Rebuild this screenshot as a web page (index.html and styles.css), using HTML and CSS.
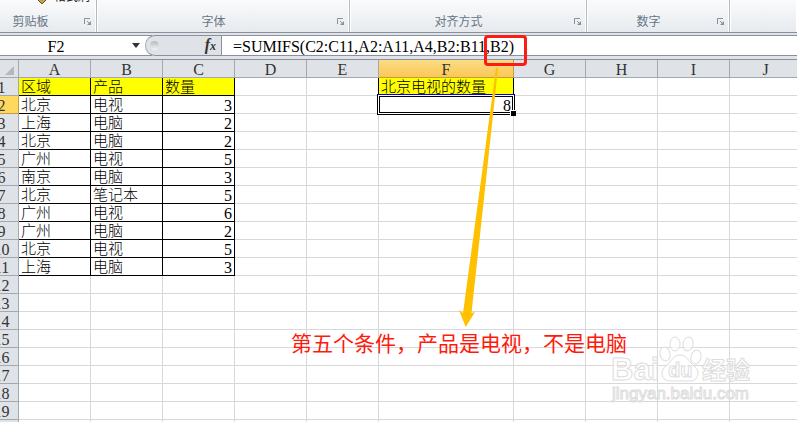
FILE: index.html
```html
<!DOCTYPE html>
<html lang="zh-CN">
<head>
    <meta charset="UTF-8">
    <meta name="viewport" content="width=device-width, initial-scale=1.0">
    <title>SUMIFS</title>
    <link rel="stylesheet" href="styles.css">
</head>
<body>
    <div class="app">
        <div class="ribbon">
            <div class="group group-clipboard">
                <button class="painter">
                    <svg width="12" height="12" viewBox="0 0 12 12"><path d="M1 7L4 4L8 4L11 7L6 12Z" fill="#c9a04a" stroke="#6b5320"/></svg>
                    格式刷
                </button>
                <span class="group-name">剪贴板</span>
                <button class="launcher" aria-label="剪贴板"><svg width="8" height="8"><use href="#launch"/></svg></button>
            </div>
            <div class="group group-font">
                <span class="group-name">字体</span>
                <button class="launcher" aria-label="字体"><svg width="8" height="8"><use href="#launch"/></svg></button>
            </div>
            <div class="group group-align">
                <span class="group-name">对齐方式</span>
                <button class="launcher" aria-label="对齐方式"><svg width="8" height="8"><use href="#launch"/></svg></button>
            </div>
            <div class="group group-number">
                <span class="group-name">数字</span>
                <button class="launcher" aria-label="数字"><svg width="8" height="8"><use href="#launch"/></svg></button>
            </div>
            <div class="group group-rest"></div>
        </div>

        <div class="formula-bar">
            <input class="name-box" type="text" value="F2" aria-label="名称框">
            <button class="name-arrow" aria-label="名称"><svg width="8" height="5"><path d="M0 0H8L4 5Z" fill="#333"/></svg></button>
            <div class="fx-area">
                <span class="knob"></span>
                <button class="fx" aria-label="插入函数">f<small>x</small></button>
            </div>
            <input class="formula" type="text" value="=SUMIFS(C2:C11,A2:A11,A4,B2:B11,B2)" aria-label="编辑栏">
        </div>

        <div class="sheet">
            <table id="grid">
                <colgroup>
                    <col class="col-num"><col><col><col><col><col><col class="col-wide"><col><col><col><col>
                </colgroup>
                <thead>
                    <tr>
                        <th class="corner"><svg width="9" height="9"><path d="M9 0V9H0Z" fill="#b4b8bd"/></svg></th>
                        <th>A</th><th>B</th><th>C</th><th>D</th><th>E</th><th class="active">F</th><th>G</th><th>H</th><th>I</th><th>J</th>
                    </tr>
                </thead>
                <tbody>
                    <!-- 由脚本生成 -->
                </tbody>
            </table>
        </div>

        <svg class="arrow" width="40" height="260" viewBox="0 0 40 260">
            <path d="M37 0L39 0L27 112L12.500 245L16 244L6.700 259L0 242L4 245L22 112Z" fill="#ffc000"/>
        </svg>
        <div class="mark"></div>
        <div class="note">第五个条件，产品是电视，不是电脑</div>

        <svg class="watermark" width="150" height="74" viewBox="0 0 150 74">
            <g fill="#fff" fill-opacity="0.7" stroke="#dcdcdc" stroke-width="1">
                <text x="1" y="46" class="wm-logo">Bai</text>
                <ellipse cx="55" cy="20" rx="5" ry="7" transform="rotate(-12 55 20)"/>
                <ellipse cx="65" cy="10" rx="5" ry="7"/>
                <ellipse cx="78" cy="10" rx="5" ry="7" transform="rotate(10 78 10)"/>
                <ellipse cx="86" cy="23" rx="5" ry="7" transform="rotate(14 86 23)"/>
                <path d="M70 21C65 21 63 24 60 28C56 32 52 34 52 40C52 45 56 47 61 47H80C85 47 88 44 88 39C88 34 83 32 80 28C77 24 75 21 70 21Z"/>
                <text x="58" y="43" class="wm-du">du</text>
                <text x="92" y="45" class="wm-cn">经验</text>
                <text x="2" y="65" class="wm-url">jingyan.baidu.com</text>
            </g>
        </svg>
    </div>

    <svg width="0" height="0" class="defs">
        <symbol id="launch" viewBox="0 0 8 8">
            <path d="M0.500 6V0.500H6" fill="none" stroke="#8b9199"/>
            <path d="M3 3L6 6" stroke="#8b9199"/>
            <path d="M7 3V7H3Z" fill="#8b9199"/>
        </symbol>
    </svg>

    <script>
        const rows = [
            ['区域', '产品', '数量'],
            ['北京', '电视', 3],
            ['上海', '电脑', 2],
            ['北京', '电脑', 2],
            ['广州', '电视', 5],
            ['南京', '电脑', 3],
            ['北京', '笔记本', 5],
            ['广州', '电视', 6],
            ['广州', '电脑', 2],
            ['北京', '电视', 5],
            ['上海', '电脑', 3]
        ];
        const tableBody = document.getElementById('grid').getElementsByTagName('tbody')[0];

        for (let r = 0; r < 20; r++) {
            const row = tableBody.insertRow();
            const head = document.createElement('th');
            if (r < 19) head.textContent = r + 1;
            if (r === 1) head.className = 'active';
            row.appendChild(head);

            for (let c = 0; c < 10; c++) {
                const cell = row.insertCell();
                if (r < rows.length && c < 3) {
                    cell.textContent = rows[r][c];
                    cell.className = 'data';
                    if (r === 0) cell.classList.add('title');
                    if (typeof rows[r][c] === 'number') cell.classList.add('num');
                }
                if (r < 2 && c === 4) cell.className = 'before-data';
                if (r === 0 && c === 5) {
                    cell.textContent = '北京电视的数量';
                    cell.className = 'data title';
                }
                if (r === 1 && c === 5) {
                    cell.textContent = '8';
                    cell.className = 'data num selected';
                }
            }
        }
    </script>
</body>
</html>
```
FILE: styles.css
```css
* {
    box-sizing: border-box;
}
body {
    margin: 0;
    background: #fff;
    font-family: "Liberation Serif", "Noto Sans CJK SC", serif;
    overflow: hidden;
}
button {
    padding: 0;
    border: none;
    background: none;
}
.app {
    position: relative;
    min-height: 100vh;
    overflow: hidden;
}
.defs {
    display: block;
}

/* ribbon */
.ribbon {
    display: flex;
    height: 33px;
    background: linear-gradient(#fafbfc, #e6eaee);
    border-bottom: 1px solid #8c9199;
}
.group {
    position: relative;
    display: flex;
    align-items: flex-end;
    padding-bottom: 1px;
    border-right: 1px solid #b4b9c0;
    box-shadow: inset 1px 0 #fff, inset -1px 0 #fff;
    font: 12px/20px "Noto Sans CJK SC", sans-serif;
    color: #687484;
}
.group-clipboard {
    width: 113px;
    margin-left: -16px;
}
.group-font {
    width: 253px;
}
.group-align {
    width: 237px;
}
.group-number {
    width: 143px;
}
.group-rest {
    flex: 1;
    border-right: none;
}
.group-name {
    flex: 1;
    text-align: center;
}
.launcher {
    width: 19px;
    height: 20px;
}
.launcher svg {
    display: block;
    margin: 2px 0 0 7px;
}
.painter {
    position: absolute;
    left: 52px;
    top: -12px;
    display: flex;
    align-items: flex-end;
    gap: 6px;
    font: 12px/16px "Noto Sans CJK SC", sans-serif;
    color: #222;
}

/* formula bar */
.formula-bar {
    display: flex;
    height: 26px;
    padding: 2px 0 3px;
    background: #dfe3ec;
}
.formula-bar input {
    height: 21px;
    border: solid #8c9199;
    border-width: 1px 0;
    outline: none;
    background: #fff;
    font: 16px "Liberation Serif", serif;
    color: #000;
}
.formula-bar .name-box {
    width: 128px;
    padding: 2px 16px 0 0;
    text-align: center;
}
.name-arrow {
    display: flex;
    align-items: center;
    width: 24px;
    padding-left: 4px;
    border: solid #8c9199;
    border-width: 1px 0;
    background: #fff;
}
.fx-area {
    display: flex;
    align-items: center;
    justify-content: space-between;
    width: 77px;
    margin-left: -7px;
    padding: 0 5px 0 4px;
    border: 1px solid #8c9199;
    border-left-color: #a7adb5;
    border-radius: 10px 0 0 10px;
    background: #dfe3e8;
}
.knob {
    width: 9px;
    height: 9px;
    border-radius: 50%;
    background: linear-gradient(#b4b9c0, #f4f5f7);
}
.fx {
    font: italic bold 16px/18px "Liberation Serif", serif;
    color: #333;
}
.fx small {
    font-size: 12px;
}
.formula-bar .formula {
    flex: 1;
    min-width: 0;
    padding: 2px 0 0 11px;
}

/* sheet */
.sheet {
    overflow: hidden;
    border-top: 1px solid #8c9199;
}
#grid {
    table-layout: fixed;
    width: 817px;
    margin-left: -15px;
    border-spacing: 0;
}
col {
    width: 72px;
}
.col-num {
    width: 34px;
}
.col-wide {
    width: 135px;
}
th, td {
    height: 18px;
    padding: 2px 2px 0;
    border: solid #d8d8d8;
    border-width: 0 1px 1px 0;
    font-size: 15px;
    font-weight: 300;
    line-height: 15px;
    text-align: left;
    white-space: nowrap;
}
th {
    padding: 2px 0 0;
    border-color: #a2a8b0;
    background: #dfe3e8;
    color: #333;
    font-size: 16px;
    font-weight: normal;
    text-align: center;
}
.corner {
    padding-right: 4px;
    text-align: right;
}
.corner svg {
    display: inline-block;
}
th.active {
    border-color: #c59a45;
    background: #ffd860;
}
thead th.active {
    background: linear-gradient(#fbdc85, #fbc855);
}
.data {
    border-color: #000;
}
.before-data {
    border-right-color: #000;
}
.title {
    background: #ff0;
}
.num {
    font-size: 16px;
    text-align: right;
}
.selected {
    position: relative;
}
.selected::before {
    content: "";
    position: absolute;
    inset: -2px;
    border: 1px solid #000;
    border-top-color: #00f;
    box-shadow: inset 0 0 0 1px #fff, inset 0 0 0 2px #000;
}
.selected::after {
    content: "";
    position: absolute;
    right: -3px;
    bottom: -3px;
    width: 5px;
    height: 5px;
    border: solid #fff;
    border-width: 1px 0 0 1px;
    background: #000;
}

/* annotations */
.mark {
    position: absolute;
    left: 484px;
    top: 35px;
    width: 43px;
    height: 31px;
    border: 3px solid #fb1d13;
    border-radius: 4px;
}
.arrow {
    position: absolute;
    left: 459px;
    top: 68px;
}
.note {
    position: absolute;
    left: 291px;
    top: 327px;
    font: 21px/30px "Noto Sans CJK SC", sans-serif;
    color: #ff1a0c;
    white-space: nowrap;
}
.watermark {
    position: absolute;
    left: 610px;
    top: 334px;
    font-family: "Liberation Sans", "Noto Sans CJK SC", sans-serif;
}
.wm-logo {
    font-size: 31px;
    font-weight: bold;
}
.wm-du {
    font-size: 20px;
    font-weight: bold;
}
.wm-cn {
    font-size: 24px;
    font-weight: bold;
}
.wm-url {
    font-size: 17px;
}
```
